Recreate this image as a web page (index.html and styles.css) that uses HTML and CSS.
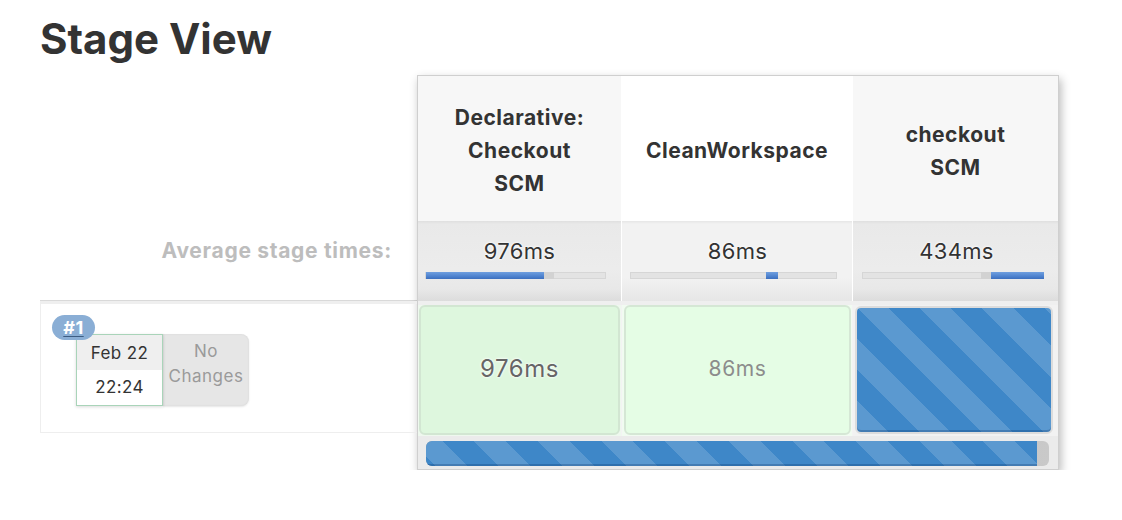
FILE: index.html
```html
<!DOCTYPE html>
<html>
<head>
<meta charset="utf-8">
<link rel="stylesheet" href="styles.css">
</head>
<body>
<div class="page">
  <h1 class="title">Stage View</h1>
  <div class="stage-view">
    <div class="left">
      <div class="left-head"></div>
      <div class="left-avg">Average stage times:</div>
      <div class="left-run">
        <span class="badge">#1</span>
        <div class="run-info">
          <div class="date">
            <div class="date-day">Feb 22</div>
            <div class="date-time">22:24</div>
          </div>
          <div class="changes">No<br>Changes</div>
        </div>
      </div>
    </div>
    <div class="stages">
      <div class="row head-row">
        <div class="col c1 head-cell alt">Declarative:<br>Checkout<br>SCM</div>
        <div class="col c2 head-cell">CleanWorkspace</div>
        <div class="col c3 head-cell alt">checkout<br>SCM</div>
      </div>
      <div class="row avg-row">
        <div class="col c1 avg-cell">
          <div class="avg-time">976ms</div>
          <div class="track"><div class="tick" style="left:118px"></div><div class="fill" style="left:0;width:118px"></div></div>
        </div>
        <div class="col c2 avg-cell light">
          <div class="avg-time">86ms</div>
          <div class="track"><div class="fill" style="left:135px;width:12px"></div></div>
        </div>
        <div class="col c3 avg-cell">
          <div class="avg-time">434ms</div>
          <div class="track"><div class="tick" style="left:118px"></div><div class="fill" style="left:128px;width:53px"></div></div>
        </div>
      </div>
      <div class="row run-row">
        <div class="col c1 run-col"><div class="stage-box success big">976ms</div></div>
        <div class="col c2 run-col"><div class="stage-box success-light">86ms</div></div>
        <div class="col c3 run-col"><div class="stage-box running"></div></div>
      </div>
      <div class="bottom">
        <div class="progress"><div class="progress-fill"></div></div>
      </div>
    </div>
  </div>
</div>
</body>
</html>
```
FILE: styles.css
```css
* { box-sizing: border-box; }
body {
  margin: 0;
  background: #fff;
  font-family: Inter, "Open Sans", "DejaVu Sans", sans-serif;
  color: #333;
}
.page { padding: 0 40px; }
.title {
  margin: 12px 0 9px;
  font-size: 42px;
  line-height: 54px;
  font-weight: 700;
  color: #333;
}
.stage-view { display: flex; align-items: flex-start; }

/* left column */
.left { width: 377px; flex: none; }
.left-head { height: 146px; }
.left-avg {
  height: 80px;
  padding: 17px 25px 0 0;
  text-align: right;
  font-size: 21px;
  letter-spacing: 0.7px;
  font-weight: 700;
  color: #bdbdbd;
  line-height: 26px;
  border-bottom: 1px solid #d9d9d9;
}
.left-run {
  position: relative;
  height: 132px;
  border-top: 3px solid #efefef;
  border-left: 1px solid #eee;
  border-bottom: 1px solid #eee;
  padding: 30px 0 0 35px;
}
.badge {
  position: absolute;
  left: 11px;
  top: 11px;
  z-index: 2;
  width: 43px;
  height: 25px;
  border-radius: 13px;
  background: #8aaed5;
  color: #fff;
  font-size: 18px;
  letter-spacing: 0.5px;
  font-weight: 700;
  line-height: 25px;
  text-align: center;
  text-decoration: underline;
  text-decoration-color: #3d5c82;
  text-underline-offset: 2px;
}
.run-info { display: flex; }
.date {
  width: 87px;
  height: 72px;
  border: 1px solid #a9d4b9;
  background: #fff;
  box-shadow: 0 1px 3px rgba(0,0,0,0.15);
  font-size: 17px;
  letter-spacing: 0.4px;
  text-align: center;
  position: relative;
  z-index: 1;
}
.date-day { height: 35px; line-height: 36px; background: #efefef; }
.date-time { height: 35px; line-height: 35px; }
.changes {
  width: 86px;
  height: 72px;
  background: #e6e6e6;
  border-radius: 0 8px 8px 0;
  box-shadow: inset 0 0 2px rgba(0,0,0,0.08), 0 1px 2px rgba(0,0,0,0.1);
  color: #9a9a9a;
  font-size: 17px;
  letter-spacing: 0.5px;
  line-height: 25px;
  text-align: center;
  padding-top: 5px;
}

/* stage table */
.stages {
  width: 642px;
  flex: none;
  border: 1px solid #cfcfcf;
  background: #fff;
  box-shadow: 2px 4px 9px rgba(0,0,0,0.28);
}
.row { display: flex; gap: 1px; background: #fff; }
.c1 { width: 203px; }
.c2 { width: 230px; }
.c3 { width: 205px; }
.head-row { height: 145px; }
.head-cell {
  display: flex;
  align-items: center;
  justify-content: center;
  text-align: center;
  font-size: 21px;
  letter-spacing: 0.5px;
  font-weight: 700;
  line-height: 33px;
  color: #333;
  background: #fff;
  padding-top: 4px;
}
.head-cell.alt { background: #f7f7f7; }

.avg-row { height: 80px; }
.avg-cell {
  background: linear-gradient(#dfdfdf 0, #e9e9e9 3px, #ececec 60%, #e8e8e8 85%, #dcdcdc 100%);
  padding: 16px 15px 0 7px;
}
.avg-cell.light {
  background: linear-gradient(#e6e6e6 0, #f2f2f2 3px, #f2f2f2 70%, #e6e6e6 100%);
  padding-left: 8px;
}
.c3.avg-cell { padding-left: 9px; }
.avg-time {
  text-align: center;
  font-size: 22px;
  letter-spacing: 0.3px;
  line-height: 28px;
  color: #333;
  text-shadow: 0 0 3px #fff, 0 0 2px #fff;
  padding-left: 8px;
}
.track {
  position: relative;
  margin-top: 7px;
  height: 7px;
  background: #e3e3e3;
  border: 1px solid #d6d6d6;
}
.tick {
  position: absolute;
  top: -1px;
  width: 10px;
  height: 7px;
  background: #d2d2d2;
}
.fill {
  position: absolute;
  top: -1px;
  height: 7px;
  background: linear-gradient(#6f9fdf, #4f83cf 60%, #3c6fbe);
}

.run-row {
  height: 135px;
  background: #f3f3f3;
  border-top: 4px solid #efefef;
}
.c1.run-col { background: #eef8ee; padding: 0 1px 1px 1px; }
.c2.run-col { background: #f1fbf1; padding: 0 1px 1px 2px; }
.c3.run-col { background: #f2f2f2; padding: 1px 5px 2px 2px; }
.stage-box {
  height: 100%;
  border-radius: 6px;
  display: flex;
  align-items: center;
  justify-content: center;
  padding-bottom: 3px;
}
.success {
  background: #def7de;
  border: 2px solid #d2e6d2;
  color: #666;
}
.success.big { font-size: 24px; letter-spacing: 0.6px; text-shadow: 0 0 3px #fff, 0 0 2px #fff; }
.success-light {
  background: #e5fde5;
  border: 2px solid #d5e7d5;
  color: #8c8c8c;
  font-size: 21px;
  letter-spacing: 0.6px;
}
.running {
  border: 2px solid #dcdcdc;
  background: repeating-linear-gradient(45deg, #5b99d0 0 22px, #3e87c8 22px 44px);
  box-shadow: inset 0 -2px 0 rgba(0,40,90,0.25);
}

.bottom {
  height: 33px;
  background: #ebebeb;
  padding: 5px 9px 3px 8px;
}
.progress {
  height: 25px;
  border-radius: 6px;
  background: linear-gradient(90deg, #a8a8a8, #c9c9c9);
  overflow: hidden;
}
.progress-fill {
  width: 98%;
  height: 100%;
  background: repeating-linear-gradient(45deg, #3e87c8 0 6.5px, #5b99d0 6.5px 29px, #3e87c8 29px 45px);
  box-shadow: inset 0 -2px 0 rgba(0,40,90,0.25);
}
```
